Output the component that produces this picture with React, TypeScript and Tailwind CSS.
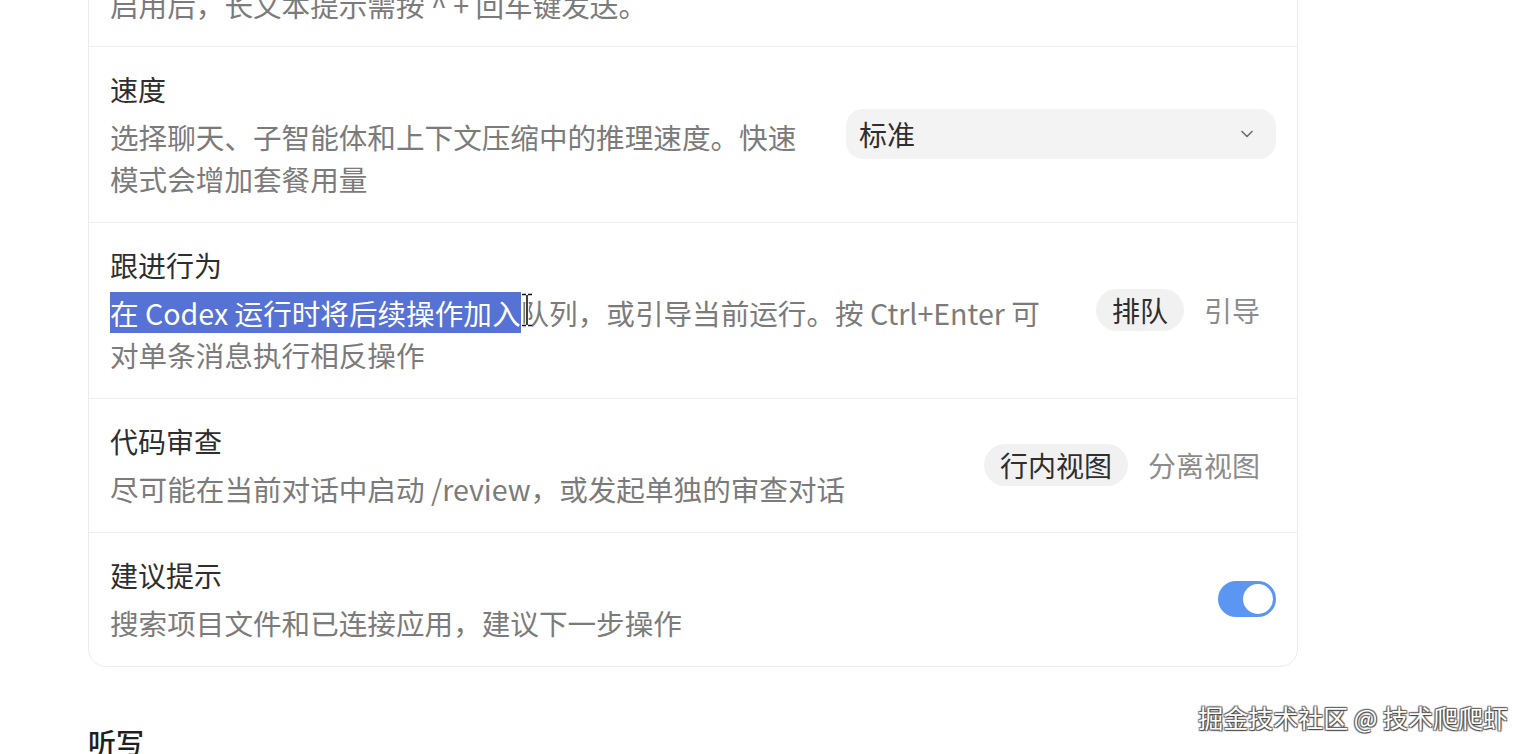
import { ChevronDown } from "lucide-react";

const font = { fontFamily: '"Noto Sans CJK SC", "Noto Sans", sans-serif' };

const Segmented = ({ options, active }: { options: string[]; active: number }) => (
  <div className="flex shrink-0 items-center gap-[4px]">
    {options.map((o, i) => (
      <div
        key={o}
        className={
          i === active
            ? "h-[42px] px-[16px] rounded-full bg-[#f1f1f1] text-[#2e2e2e] flex items-center text-[28px]"
            : "h-[42px] px-[16px] rounded-full text-[#8c8c8c] flex items-center text-[28px]"
        }
      >
        {o}
      </div>
    ))}
  </div>
);

const App = () => {
  return (
    <div className="relative w-[1529px] h-[754px] overflow-hidden bg-white" style={font}>
      <div className="ml-[88px] w-[1210px] -mt-[41px]">
        {/* Settings card */}
        <div className="border border-[#ececec] rounded-b-[18px] bg-white">
          <div className="px-[21px] pt-[24px] pb-[20px]">
            <p className="text-[28.6px] leading-[42px] text-[#7b7b7b]">启用后，长文本提示需按 ^ + 回车键发送。</p>
          </div>

          {/* 速度 */}
          <div className="flex items-center gap-[32px] border-t border-[#efefef] px-[21px] pt-[21px] pb-[22px]">
            <div className="flex-1">
              <div className="text-[28px] leading-[42px] text-[#2e2e2e]">速度</div>
              <p className="mt-[6px] text-[28.6px] leading-[42px] text-[#7b7b7b]">
                选择聊天、子智能体和上下文压缩中的推理速度。快速模式会增加套餐用量
              </p>
            </div>
            <div className="w-[430px] h-[50px] shrink-0 rounded-[17px] bg-[#f3f3f3] flex items-center justify-between pl-[13px] pr-[19px]">
              <span className="text-[28px] text-[#2e2e2e]">标准</span>
              <ChevronDown size={20} strokeWidth={2} className="text-[#6e6e6e]" />
            </div>
          </div>

          {/* 跟进行为 */}
          <div className="flex items-center gap-[32px] border-t border-[#efefef] px-[21px] pt-[21px] pb-[22px]">
            <div className="flex-1 relative">
              <div className="text-[28px] leading-[42px] text-[#2e2e2e]">跟进行为</div>
              <p className="mt-[6px] text-[28.6px] leading-[42px] text-[#7b7b7b]">
                <span className="bg-[#5572d4] text-white">在 Codex 运行时将后续操作加入</span>
                队列，或引导当前运行。按 Ctrl+Enter 可对单条消息执行相反操作
              </p>
              {/* text cursor */}
              <svg
                className="absolute left-[410px] top-[49px]"
                width="14"
                height="34"
                viewBox="0 0 14 34"
                fill="none"
              >
                <path d="M2 1.5h4M8 1.5h4M7 2v30M2 32.5h4M8 32.5h4" stroke="#fff" strokeWidth="3.5" />
                <path d="M2 1.5h4M8 1.5h4M7 2v30M2 32.5h4M8 32.5h4" stroke="#111" strokeWidth="1.6" />
              </svg>
            </div>
            <Segmented options={["排队", "引导"]} active={0} />
          </div>

          {/* 代码审查 */}
          <div className="flex items-center gap-[32px] border-t border-[#efefef] px-[21px] pt-[21px] pb-[22px]">
            <div className="flex-1">
              <div className="text-[28px] leading-[42px] text-[#2e2e2e]">代码审查</div>
              <p className="mt-[6px] text-[28.6px] leading-[42px] text-[#7b7b7b]">
                尽可能在当前对话中启动 /review，或发起单独的审查对话
              </p>
            </div>
            <Segmented options={["行内视图", "分离视图"]} active={0} />
          </div>

          {/* 建议提示 */}
          <div className="flex items-center gap-[32px] border-t border-[#efefef] px-[21px] pt-[21px] pb-[22px]">
            <div className="flex-1">
              <div className="text-[28px] leading-[42px] text-[#2e2e2e]">建议提示</div>
              <p className="mt-[6px] text-[28.6px] leading-[42px] text-[#7b7b7b]">
                搜索项目文件和已连接应用，建议下一步操作
              </p>
            </div>
            <div className="w-[58px] h-[36px] shrink-0 rounded-full bg-[#5b97f2] flex items-center justify-end pr-[3px]">
              <div className="w-[30px] h-[30px] rounded-full bg-white" />
            </div>
          </div>
        </div>

        <h2 className="mt-[54px] text-[28px] leading-[42px] font-medium text-[#1f1f1f]">听写</h2>
      </div>

      {/* watermark */}
      <div className="absolute right-[21px] top-[701px] text-[25px] leading-[32px] text-white [text-shadow:1px_1px_1px_#444,-1px_-1px_1px_#666,1px_-1px_1px_#666,-1px_1px_1px_#666]">
        掘金技术社区 @ 技术爬爬虾
      </div>
    </div>
  );
};

export default App;
